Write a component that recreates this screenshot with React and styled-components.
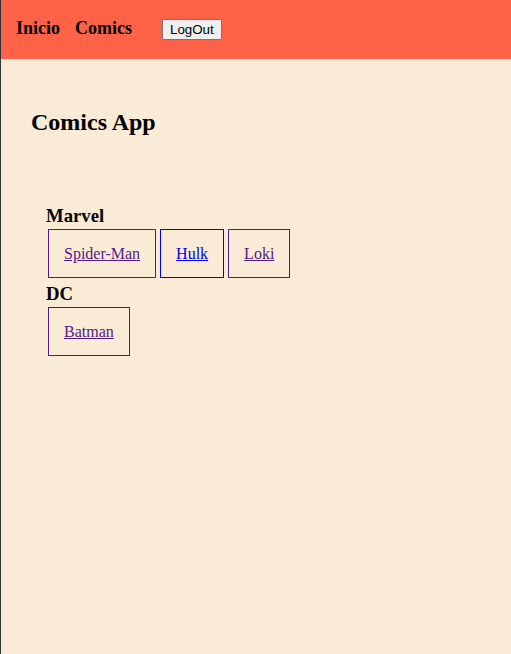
import React from "react";
import styled, { createGlobalStyle } from "styled-components";

const Global = createGlobalStyle`
  html, body {
    margin: 0;
    padding: 0;
    background: #faebd7;
  }
  body {
    font-family: "Liberation Serif", "Times New Roman", serif;
  }
`;

const Page = styled.div`
  min-height: 100vh;
  border-left: 1px solid #2f3437;
  box-sizing: border-box;
`;

const Header = styled.header`
  height: 59px;
  background: #ff6347;
  display: flex;
  align-items: center;
  padding-left: 15px;
`;

const NavLink = styled.span`
  font-size: 18px;
  font-weight: bold;
  color: #000;
  margin-right: ${(p) => p.gap}px;
  position: relative;
  top: -1px;
`;

const LogOut = styled.button`
  font-family: "Liberation Sans", Arial, sans-serif;
  font-size: 13.33px;
  padding: 1px 7px;
  height: 21px;
  border: 1px solid #767676;
  border-radius: 2px;
  background: #efefef;
  color: #000;
`;

const Main = styled.main`
  padding: 50px 0 0 30px;
`;

const Title = styled.h2`
  margin: 0;
  font-size: 24px;
  font-weight: bold;
`;

const Catalog = styled.section`
  margin-top: 69px;
  padding-left: 15px;
  display: flex;
  flex-direction: column;
`;

const Publisher = styled.h3`
  margin: 0;
  font-size: 18.72px;
  line-height: 22px;
  margin-top: ${(p) => (p.first ? 0 : 3)}px;
`;

const Row = styled.div`
  display: flex;
  flex-wrap: wrap;
`;

const Card = styled.a`
  display: inline-block;
  margin: 2px;
  padding: 14px 15px;
  line-height: 19px;
  font-size: 16px;
  color: ${(p) => (p.visited ? "#551a8b" : "#0000ee")};
  border: 1px solid currentColor;
  text-decoration: underline;
  cursor: pointer;
`;

const groups = [
  {
    name: "Marvel",
    heroes: [
      { name: "Spider-Man", visited: true },
      { name: "Hulk", visited: false },
      { name: "Loki", visited: true },
    ],
  },
  {
    name: "DC",
    heroes: [{ name: "Batman", visited: true }],
  },
];

export default function App() {
  return (
    <>
      <Global />
      <Page>
        <Header>
          <NavLink gap={15}>Inicio</NavLink>
          <NavLink gap={30}>Comics</NavLink>
          <LogOut>LogOut</LogOut>
        </Header>
        <Main>
          <Title>Comics App</Title>
          <Catalog>
            {groups.map((g, i) => (
              <React.Fragment key={g.name}>
                <Publisher first={i === 0}>{g.name}</Publisher>
                <Row>
                  {g.heroes.map((h) => (
                    <Card key={h.name} visited={h.visited}>
                      {h.name}
                    </Card>
                  ))}
                </Row>
              </React.Fragment>
            ))}
          </Catalog>
        </Main>
      </Page>
    </>
  );
}
